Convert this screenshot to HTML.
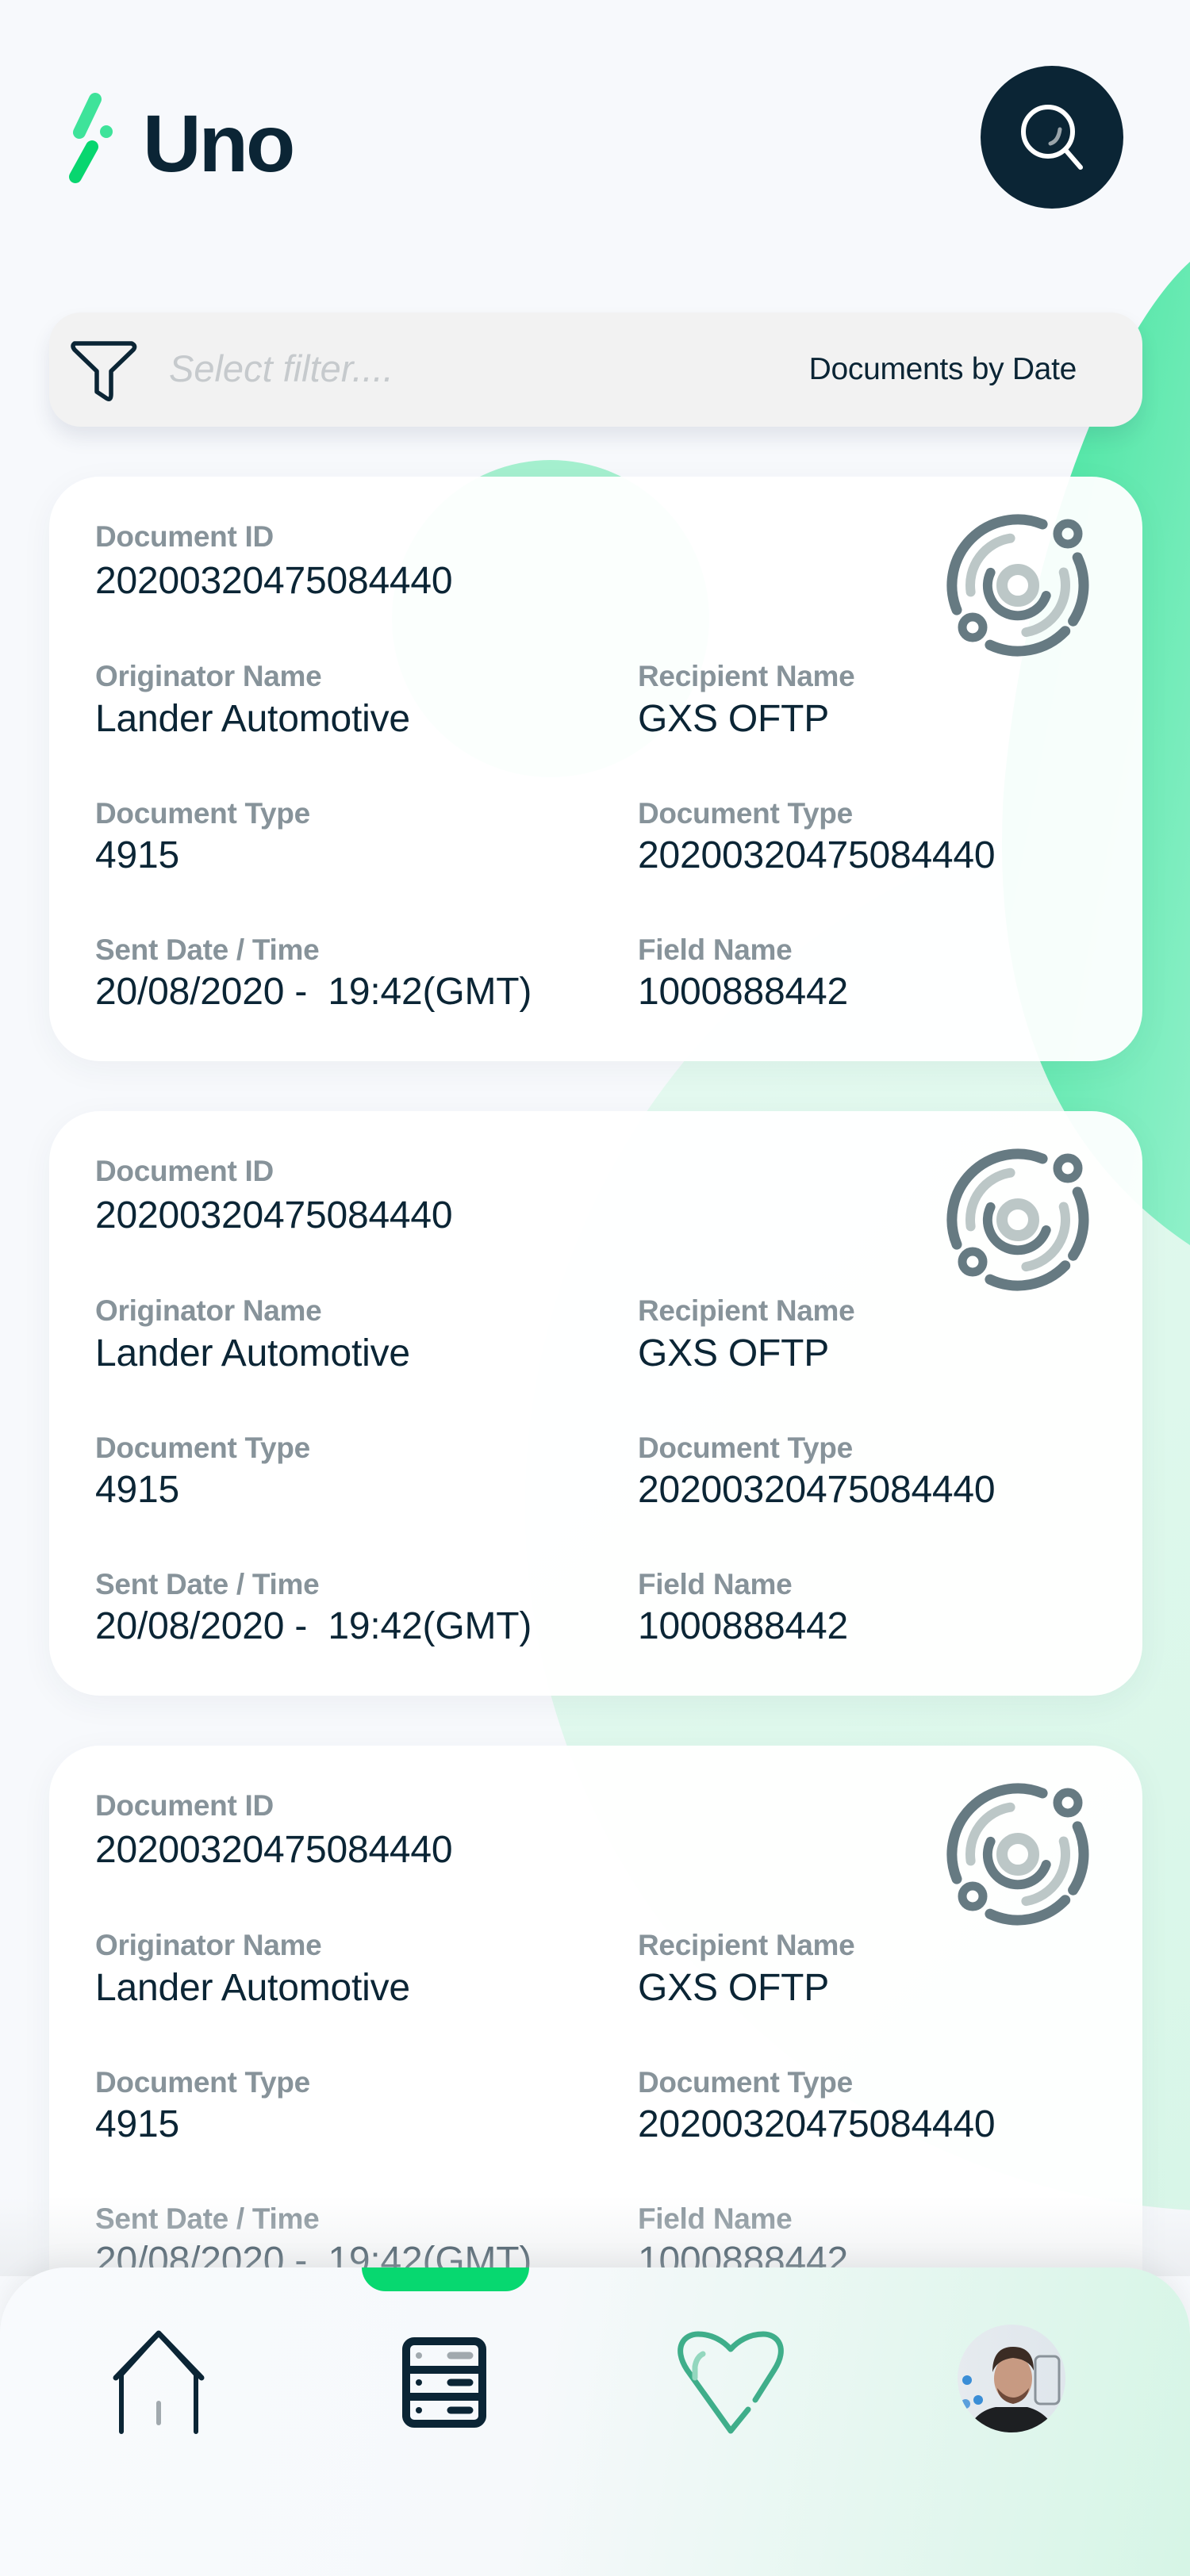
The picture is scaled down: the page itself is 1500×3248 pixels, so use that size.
<!DOCTYPE html>
<html><head><meta charset="utf-8"><style>
*{margin:0;padding:0;box-sizing:border-box}
body{width:1500px;height:3248px;overflow:hidden;background:#f7f9fc;font-family:"Liberation Sans",sans-serif;position:relative}
.abs{position:absolute}
.card{position:absolute;left:62px;width:1378px;height:737px;border-radius:64px;background:rgba(255,255,255,0.95);box-shadow:0 10px 40px rgba(30,60,80,0.05)}
.lb{position:absolute;font-weight:bold;font-size:37px;line-height:40px;height:40px;color:#87939a;letter-spacing:-0.3px;white-space:nowrap}
.vl{position:absolute;font-size:48px;line-height:54px;height:54px;color:#0b2535;letter-spacing:-0.2px;white-space:nowrap}
</style></head><body>
<svg class="abs" style="left:0;top:0" width="1500" height="3248">
<defs>
<linearGradient id="gb" x1="0" y1="0" x2="1" y2="1"><stop offset="0" stop-color="#3fe39b"/><stop offset="1" stop-color="#8ff0c9"/></linearGradient>
<linearGradient id="gp" x1="0" y1="0" x2="1" y2="1"><stop offset="0" stop-color="#e6faf1"/><stop offset="1" stop-color="#d3f5e5"/></linearGradient>
</defs>
<circle cx="1550" cy="1900" r="888" fill="url(#gp)"/>
<path d="M1500,330 C1400,420 1290,700 1265,1000 C1250,1250 1320,1450 1500,1570 Z" fill="url(#gb)"/>
<circle cx="694" cy="780" r="200" fill="#a5f0cf"/>
</svg>
<!-- logo -->
<svg class="abs" style="left:70px;top:105px" width="90" height="140">
<line x1="50" y1="20" x2="30" y2="62" stroke="#3ee39a" stroke-width="16" stroke-linecap="round"/>
<circle cx="64" cy="61" r="8" fill="#3ee39a"/>
<line x1="46" y1="80" x2="25" y2="118" stroke="#08d66f" stroke-width="16" stroke-linecap="round"/>
</svg>
<div class="abs" style="left:180px;top:116px;font-size:102px;font-weight:bold;color:#0b2535;letter-spacing:-3px;line-height:130px">Uno</div>
<div class="abs" style="left:1236px;top:83px;width:180px;height:180px;border-radius:50%;background:#0b2535"></div>
<svg class="abs" style="left:1236px;top:83px" width="180" height="180">
<circle cx="85" cy="83" r="31" fill="none" stroke="#fff" stroke-width="6"/>
<line x1="107" y1="106" x2="126" y2="128" stroke="#fff" stroke-width="6" stroke-linecap="round"/>
<path d="M100,80 Q98,95 88,98" fill="none" stroke="#9aa4aa" stroke-width="5" stroke-linecap="round"/>
</svg>
<!-- filter -->
<div class="abs" style="left:62px;top:394px;width:1378px;height:144px;border-radius:40px;background:#f2f2f2;box-shadow:0 14px 24px rgba(40,50,90,0.10)"></div>
<svg class="abs" style="left:80px;top:420px" width="100" height="100">
<path d="M14,13 L86,13 Q92,16 88,21 L60,48 L60,77 Q60,86 54,82 L42,74 L42,48 L14,21 Q10,16 14,13 Z" fill="none" stroke="#0b2535" stroke-width="5.5" stroke-linejoin="round"/>
</svg>
<div class="abs" style="left:213px;top:437px;font-size:47px;font-style:italic;color:#c6cacd;line-height:56px">Select filter....</div>
<div class="abs" style="left:962px;top:443px;width:395px;text-align:right;font-size:39px;color:#0b2535;line-height:46px;letter-spacing:-0.3px">Documents by Date</div>

<div class="card" style="top:601px"></div>
<div class="card" style="top:1401px"></div>
<div class="card" style="top:2201px"></div>

<div class="abs" style="left:0;top:601px;width:1500px;height:737px">
<div class="lb" style="left:120px;top:56px">Document ID</div><div class="vl" style="left:120px;top:105px">20200320475084440</div>
<div class="lb" style="left:120px;top:232px">Originator Name</div><div class="vl" style="left:120px;top:279px">Lander Automotive</div>
<div class="lb" style="left:804px;top:232px">Recipient Name</div><div class="vl" style="left:804px;top:279px">GXS OFTP</div>
<div class="lb" style="left:120px;top:405px">Document Type</div><div class="vl" style="left:120px;top:451px">4915</div>
<div class="lb" style="left:804px;top:405px">Document Type</div><div class="vl" style="left:804px;top:451px">20200320475084440</div>
<div class="lb" style="left:120px;top:577px">Sent Date / Time</div><div class="vl" style="left:120px;top:623px">20/08/2020 -&nbsp; 19:42(GMT)</div>
<div class="lb" style="left:804px;top:577px">Field Name</div><div class="vl" style="left:804px;top:623px">1000888442</div>
<svg class="abs" style="left:1193px;top:47px" width="180" height="180" viewBox="-90 -90 180 180"><g fill="none" stroke-linecap="round">
<path d="M31.1,-77 A83 83 0 0 0 -77,31.1 M75.2,-35.1 A83 83 0 0 1 69.6,45.2 M59.7,57.7 A83 83 0 0 1 -35.1,75.2" stroke="#667a82" stroke-width="13"/>
<path d="M-59.4,8.4 A60 60 0 0 1 -9.4,-59.3 M57.7,-16.5 A60 60 0 0 1 10.4,59.1" stroke="#bcc7c7" stroke-width="12"/>
<path d="M35.7,13 A38 38 0 1 1 -34.4,-16.1" stroke="#667a82" stroke-width="12"/>
<circle r="20" stroke="#bcc7c7" stroke-width="14"/>
<circle cx="63" cy="-65" r="13" stroke="#667a82" stroke-width="11"/>
<circle cx="-57" cy="53" r="13" stroke="#667a82" stroke-width="11"/></g></svg>
</div>
<div class="abs" style="left:0;top:1401px;width:1500px;height:737px">
<div class="lb" style="left:120px;top:56px">Document ID</div><div class="vl" style="left:120px;top:105px">20200320475084440</div>
<div class="lb" style="left:120px;top:232px">Originator Name</div><div class="vl" style="left:120px;top:279px">Lander Automotive</div>
<div class="lb" style="left:804px;top:232px">Recipient Name</div><div class="vl" style="left:804px;top:279px">GXS OFTP</div>
<div class="lb" style="left:120px;top:405px">Document Type</div><div class="vl" style="left:120px;top:451px">4915</div>
<div class="lb" style="left:804px;top:405px">Document Type</div><div class="vl" style="left:804px;top:451px">20200320475084440</div>
<div class="lb" style="left:120px;top:577px">Sent Date / Time</div><div class="vl" style="left:120px;top:623px">20/08/2020 -&nbsp; 19:42(GMT)</div>
<div class="lb" style="left:804px;top:577px">Field Name</div><div class="vl" style="left:804px;top:623px">1000888442</div>
<svg class="abs" style="left:1193px;top:47px" width="180" height="180" viewBox="-90 -90 180 180"><g fill="none" stroke-linecap="round">
<path d="M31.1,-77 A83 83 0 0 0 -77,31.1 M75.2,-35.1 A83 83 0 0 1 69.6,45.2 M59.7,57.7 A83 83 0 0 1 -35.1,75.2" stroke="#667a82" stroke-width="13"/>
<path d="M-59.4,8.4 A60 60 0 0 1 -9.4,-59.3 M57.7,-16.5 A60 60 0 0 1 10.4,59.1" stroke="#bcc7c7" stroke-width="12"/>
<path d="M35.7,13 A38 38 0 1 1 -34.4,-16.1" stroke="#667a82" stroke-width="12"/>
<circle r="20" stroke="#bcc7c7" stroke-width="14"/>
<circle cx="63" cy="-65" r="13" stroke="#667a82" stroke-width="11"/>
<circle cx="-57" cy="53" r="13" stroke="#667a82" stroke-width="11"/></g></svg>
</div>
<div class="abs" style="left:0;top:2201px;width:1500px;height:737px">
<div class="lb" style="left:120px;top:56px">Document ID</div><div class="vl" style="left:120px;top:105px">20200320475084440</div>
<div class="lb" style="left:120px;top:232px">Originator Name</div><div class="vl" style="left:120px;top:279px">Lander Automotive</div>
<div class="lb" style="left:804px;top:232px">Recipient Name</div><div class="vl" style="left:804px;top:279px">GXS OFTP</div>
<div class="lb" style="left:120px;top:405px">Document Type</div><div class="vl" style="left:120px;top:451px">4915</div>
<div class="lb" style="left:804px;top:405px">Document Type</div><div class="vl" style="left:804px;top:451px">20200320475084440</div>
<div class="lb" style="left:120px;top:577px">Sent Date / Time</div><div class="vl" style="left:120px;top:623px">20/08/2020 -&nbsp; 19:42(GMT)</div>
<div class="lb" style="left:804px;top:577px">Field Name</div><div class="vl" style="left:804px;top:623px">1000888442</div>
<svg class="abs" style="left:1193px;top:47px" width="180" height="180" viewBox="-90 -90 180 180"><g fill="none" stroke-linecap="round">
<path d="M31.1,-77 A83 83 0 0 0 -77,31.1 M75.2,-35.1 A83 83 0 0 1 69.6,45.2 M59.7,57.7 A83 83 0 0 1 -35.1,75.2" stroke="#667a82" stroke-width="13"/>
<path d="M-59.4,8.4 A60 60 0 0 1 -9.4,-59.3 M57.7,-16.5 A60 60 0 0 1 10.4,59.1" stroke="#bcc7c7" stroke-width="12"/>
<path d="M35.7,13 A38 38 0 1 1 -34.4,-16.1" stroke="#667a82" stroke-width="12"/>
<circle r="20" stroke="#bcc7c7" stroke-width="14"/>
<circle cx="63" cy="-65" r="13" stroke="#667a82" stroke-width="11"/>
<circle cx="-57" cy="53" r="13" stroke="#667a82" stroke-width="11"/></g></svg>
</div>

<div class="abs" style="left:0;top:2770px;width:1500px;height:100px;background:linear-gradient(rgba(230,233,236,0),rgba(228,231,234,0.6))"></div>
<div class="abs" style="left:0;top:2859px;width:1500px;height:389px;border-radius:84px 84px 0 0;background:linear-gradient(100deg,#f8fafd 0%,#f6f9fb 45%,#d6f5e6 100%);box-shadow:0 -10px 30px rgba(0,0,0,0.05)"></div>
<div class="abs" style="left:456px;top:2859px;width:211px;height:30px;background:#07d870;border-radius:0 0 30px 30px"></div>
<svg class="abs" style="left:0;top:2900px" width="1500" height="200">
<path d="M153,166 L153,94 L200,42 L247,94 L247,166" fill="none" stroke="#0b2535" stroke-width="6" stroke-linecap="round" stroke-linejoin="round"/>
<path d="M146,98 L200,42 L254,98" fill="none" stroke="#0b2535" stroke-width="7" stroke-linecap="round" stroke-linejoin="round"/>
<line x1="200" y1="130" x2="200" y2="155" stroke="#a1a9ae" stroke-width="6" stroke-linecap="round"/>
<rect x="512" y="52" width="96" height="104" rx="10" fill="none" stroke="#0b2535" stroke-width="10"/>
<line x1="512" y1="88" x2="608" y2="88" stroke="#0b2535" stroke-width="10"/>
<line x1="512" y1="122" x2="608" y2="122" stroke="#0b2535" stroke-width="10"/>
<circle cx="528" cy="70" r="4" fill="#a1a9ae"/><line x1="568" y1="70" x2="592" y2="70" stroke="#a1a9ae" stroke-width="9" stroke-linecap="round"/>
<circle cx="528" cy="104" r="4" fill="#0b2535"/><line x1="568" y1="104" x2="592" y2="104" stroke="#0b2535" stroke-width="9" stroke-linecap="round"/>
<circle cx="528" cy="139" r="4" fill="#0b2535"/><line x1="568" y1="139" x2="592" y2="139" stroke="#0b2535" stroke-width="9" stroke-linecap="round"/>
<path d="M921,165 L866,88 C848,60 862,43 880,43 C898,43 912,52 921,62 C930,52 944,43 962,43 C980,43 994,60 976,88 L952,126 M943,138 L921,165" fill="none" stroke="#3fae8a" stroke-width="7" stroke-linecap="round" stroke-linejoin="round"/>
<path d="M876,98 L876,84 Q878,72 886,68" fill="none" stroke="#93d7be" stroke-width="7" stroke-linecap="round"/>
</svg>
<svg class="abs" style="left:1205px;top:2931px" width="140" height="140">
<defs><clipPath id="av"><circle cx="70" cy="68" r="68"/></clipPath>
<linearGradient id="avb" x1="0" y1="0" x2="1" y2="0"><stop offset="0" stop-color="#e6ebef"/><stop offset="1" stop-color="#dfe6ec"/></linearGradient></defs>
<g clip-path="url(#av)">
<rect width="140" height="140" fill="url(#avb)"/>
<circle cx="14" cy="70" r="6" fill="#3a8ed6"/><circle cx="28" cy="95" r="6" fill="#3a8ed6"/><circle cx="12" cy="100" r="6" fill="#5aa0dc"/>
<rect x="100" y="40" width="30" height="60" rx="6" fill="none" stroke="#8a939a" stroke-width="3"/>
<path d="M10,145 Q20,110 50,104 L90,104 Q120,112 130,145 Z" fill="#1d1f22"/>
<ellipse cx="72" cy="68" rx="24" ry="30" fill="#c79a82"/>
<path d="M46,60 Q46,28 72,28 Q98,28 98,58 Q92,44 72,42 Q52,44 46,60 Z" fill="#3b2c24"/>
<path d="M52,80 Q72,104 92,80 Q90,96 72,100 Q54,96 52,80 Z" fill="#6e4a3a"/>
</g></svg>
</body></html>
